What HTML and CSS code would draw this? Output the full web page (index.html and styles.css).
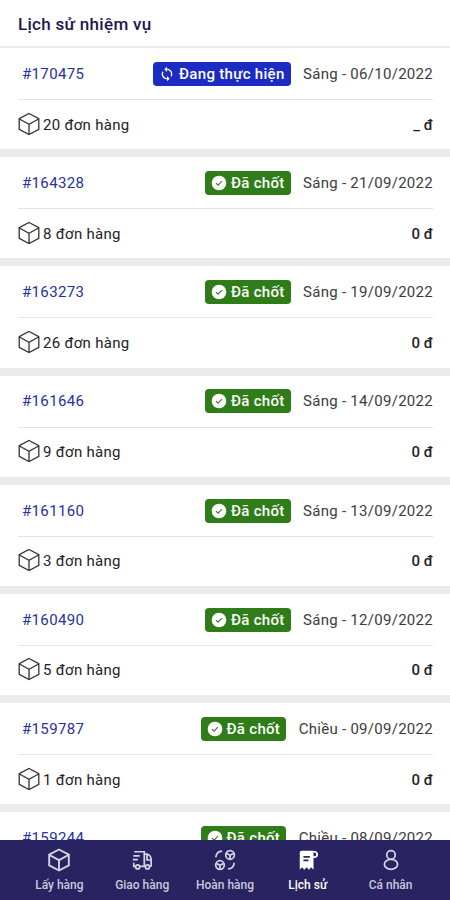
FILE: index.html
```
<!DOCTYPE html>
<html lang="vi">

<head>
    <meta charset="UTF-8">
    <meta name="viewport" content="width=device-width, initial-scale=1.0">
    <title>Lịch sử nhiệm vụ</title>
    <link rel="stylesheet" href="styles.css">
</head>

<body>

    <svg class="sprite">
        <symbol id="box" viewBox="0 0 24 24">
            <path d="M12 1.5 L21.8 6.6 V17.4 L12 22.5 L2.2 17.4 V6.6 Z M2.4 7 L12 12.2 L21.6 7 M12 12.2 V22.3" />
        </symbol>
        <symbol id="check" viewBox="0 0 16 16">
            <circle cx="8" cy="8" r="7.3" fill="#fff" />
            <path d="M5 8.2 L7.1 10.2 L11 6" fill="none" stroke="#2f7d18" stroke-width="1.1" />
        </symbol>
        <symbol id="sync" viewBox="0 0 24 24">
            <path d="M12 4V1L8 5l4 4V6c3.31 0 6 2.69 6 6 0 1.01-.25 1.97-.7 2.8l1.46 1.46C19.54 15.03 20 13.57 20 12c0-4.42-3.58-8-8-8zm0 14c-3.31 0-6-2.69-6-6 0-1.01.25-1.97.7-2.8L5.24 7.74C4.46 8.97 4 10.43 4 12c0 4.42 3.58 8 8 8v3l4-4-4-4v3z" fill="#fff" />
        </symbol>
    </svg>

    <header class="header">
        <h1>Lịch sử nhiệm vụ</h1>
    </header>

    <main class="list">
        <div class="card">
            <div class="top">
                <a class="code">#170475</a>
                <span class="badge doing"><svg><use href="#sync" /></svg>Đang thực hiện</span>
                <span class="date">Sáng - 06/10/2022</span>
            </div>
            <div class="bottom">
                <svg class="box"><use href="#box" /></svg>
                <span>20 đơn hàng</span>
                <span class="money">_ đ</span>
            </div>
        </div>

        <div class="card">
            <div class="top">
                <a class="code">#164328</a>
                <span class="badge done"><svg><use href="#check" /></svg>Đã chốt</span>
                <span class="date">Sáng - 21/09/2022</span>
            </div>
            <div class="bottom">
                <svg class="box"><use href="#box" /></svg>
                <span>8 đơn hàng</span>
                <span class="money">0 đ</span>
            </div>
        </div>

        <div class="card">
            <div class="top">
                <a class="code">#163273</a>
                <span class="badge done"><svg><use href="#check" /></svg>Đã chốt</span>
                <span class="date">Sáng - 19/09/2022</span>
            </div>
            <div class="bottom">
                <svg class="box"><use href="#box" /></svg>
                <span>26 đơn hàng</span>
                <span class="money">0 đ</span>
            </div>
        </div>

        <div class="card">
            <div class="top">
                <a class="code">#161646</a>
                <span class="badge done"><svg><use href="#check" /></svg>Đã chốt</span>
                <span class="date">Sáng - 14/09/2022</span>
            </div>
            <div class="bottom">
                <svg class="box"><use href="#box" /></svg>
                <span>9 đơn hàng</span>
                <span class="money">0 đ</span>
            </div>
        </div>

        <div class="card">
            <div class="top">
                <a class="code">#161160</a>
                <span class="badge done"><svg><use href="#check" /></svg>Đã chốt</span>
                <span class="date">Sáng - 13/09/2022</span>
            </div>
            <div class="bottom">
                <svg class="box"><use href="#box" /></svg>
                <span>3 đơn hàng</span>
                <span class="money">0 đ</span>
            </div>
        </div>

        <div class="card">
            <div class="top">
                <a class="code">#160490</a>
                <span class="badge done"><svg><use href="#check" /></svg>Đã chốt</span>
                <span class="date">Sáng - 12/09/2022</span>
            </div>
            <div class="bottom">
                <svg class="box"><use href="#box" /></svg>
                <span>5 đơn hàng</span>
                <span class="money">0 đ</span>
            </div>
        </div>

        <div class="card">
            <div class="top">
                <a class="code">#159787</a>
                <span class="badge done"><svg><use href="#check" /></svg>Đã chốt</span>
                <span class="date">Chiều - 09/09/2022</span>
            </div>
            <div class="bottom">
                <svg class="box"><use href="#box" /></svg>
                <span>1 đơn hàng</span>
                <span class="money">0 đ</span>
            </div>
        </div>

        <div class="card">
            <div class="top">
                <a class="code">#159244</a>
                <span class="badge done"><svg><use href="#check" /></svg>Đã chốt</span>
                <span class="date">Chiều - 08/09/2022</span>
            </div>
        </div>
    </main>

    <nav class="tabs">
        <a class="tab">
            <svg class="cube" viewBox="0 0 24 24"><use href="#box" /></svg>
            Lấy hàng
        </a>
        <a class="tab">
            <svg viewBox="0 0 24 24">
                <path d="M3.5 3 H14.5 V18 M2.5 7.5 H9.5 M2 11.5 H7.5 M3 15 V19 H5 M9.5 19 H15.5 M14.5 5.5 H17.5 C20.5 6.5 22 9 22 12 V18.5 H20.5 M17.5 6 V12 H21.5" />
                <circle cx="7.3" cy="19.5" r="2.2" />
                <circle cx="18" cy="19.5" r="2.2" />
            </svg>
            Giao hàng
        </a>
        <a class="tab">
            <svg viewBox="0 0 24 24">
                <path d="M2 9 C2.3 5 4.8 2.5 8.8 2.2 M22 15 C21.7 19 19.2 21.5 15.2 21.8" />
                <circle cx="17.5" cy="6.5" r="4.7" />
                <path d="M13.5 4.7 L17.5 6.8 L21.5 4.7 M17.5 6.8 V11" />
                <circle cx="6.5" cy="17.5" r="4.7" />
                <path d="M2.5 15.7 L6.5 17.8 L10.5 15.7 M6.5 17.8 V22" />
            </svg>
            Hoàn hàng
        </a>
        <a class="tab active">
            <svg viewBox="0 0 24 24">
                <path class="paper" d="M5 2 H18 V22.5 L15.5 20 L13 22.5 L10.5 20 L8 22.5 L5.5 20 L3 22.5 V4 C3 3 4 2 5 2 Z" />
                <path class="curl" d="M16 3 H19 C21.2 3 22 4.5 22 6 C22 8 20.8 8.8 19 8.8 H17" />
                <path class="lines" d="M7 8.5 H14 M7 12.5 H12.5" />
            </svg>
            Lịch sử
        </a>
        <a class="tab">
            <svg viewBox="0 0 24 24">
                <circle cx="12" cy="6.5" r="4.6" />
                <ellipse cx="12" cy="16.7" rx="7.2" ry="5.4" />
            </svg>
            Cá nhân
        </a>
    </nav>

</body>

</html>
```
FILE: styles.css
```
* {
    box-sizing: border-box;
}

body {
    font-family: Roboto, "Noto Sans", sans-serif;
    font-size: 15px;
    background-color: #fff;
    color: #222;
    margin: 0;
    display: flex;
    flex-direction: column;
    height: 900px;
    overflow: hidden;
}

.sprite {
    display: none;
}

.header {
    height: 48px;
    flex-shrink: 0;
    padding: 0 18px;
    border-bottom: 2px solid #ebebed;
    display: flex;
    align-items: center;
}

h1 {
    margin: 0;
    padding-top: 2px;
    font-size: 17px;
    font-weight: 500;
    letter-spacing: 0.3px;
    color: #1d1650;
}

.list {
    flex: 1;
    min-height: 0;
    overflow: hidden;
}

.card {
    height: 109.2px;
    padding: 0 17px 0 18px;
    border-bottom: 8px solid #ebebee;
}

.top {
    display: flex;
    align-items: center;
    height: 52px;
    padding-top: 0.6px;
    border-bottom: 1px solid #e4e4e6;
}

.code {
    padding-left: 4px;
    color: #2630a0;
    letter-spacing: 0.35px;
}

.badge {
    display: flex;
    align-items: center;
    gap: 4px;
    height: 24px;
    margin-left: auto;
    padding: 0 6px;
    border-radius: 4px;
    color: #fff;
    font-weight: 500;
    letter-spacing: 0.3px;
}

.badge svg {
    width: 16px;
    height: 16px;
}

.doing {
    background-color: #1b2bc4;
}

.done {
    background-color: #2f7d18;
}

.date {
    margin-left: 12.5px;
    color: #3c3c3c;
    letter-spacing: 0.28px;
}

.bottom {
    display: flex;
    align-items: center;
    height: 49px;
    letter-spacing: 0.3px;
}

.box {
    width: 24px;
    height: 24px;
    margin: -2px 2px 0 -1px;
    fill: none;
    stroke: #333;
    stroke-width: 1.3;
}

.money {
    margin-left: auto;
    font-weight: 500;
    letter-spacing: 0;
}

.tabs {
    display: flex;
    height: 60px;
    flex-shrink: 0;
    padding: 0 18px;
    background-color: #292361;
}

.tab {
    flex: 1;
    display: flex;
    flex-direction: column;
    align-items: center;
    padding-top: 8px;
    color: #c9c8dc;
    font-size: 12px;
    font-weight: 500;
    line-height: 16px;
}

.tab svg {
    width: 22px;
    height: 22px;
    margin: 1px 0 6px;
    fill: none;
    stroke: #d4d3e4;
    stroke-width: 1.9;
}

.tab .cube {
    width: 24px;
    height: 24px;
    margin: 0 0 5px;
}

.active {
    color: #fff;
}

.tab .paper {
    fill: #fff;
    stroke: none;
}

.tab .curl {
    stroke: #fff;
}

.tab .lines {
    stroke: #292361;
}
```
